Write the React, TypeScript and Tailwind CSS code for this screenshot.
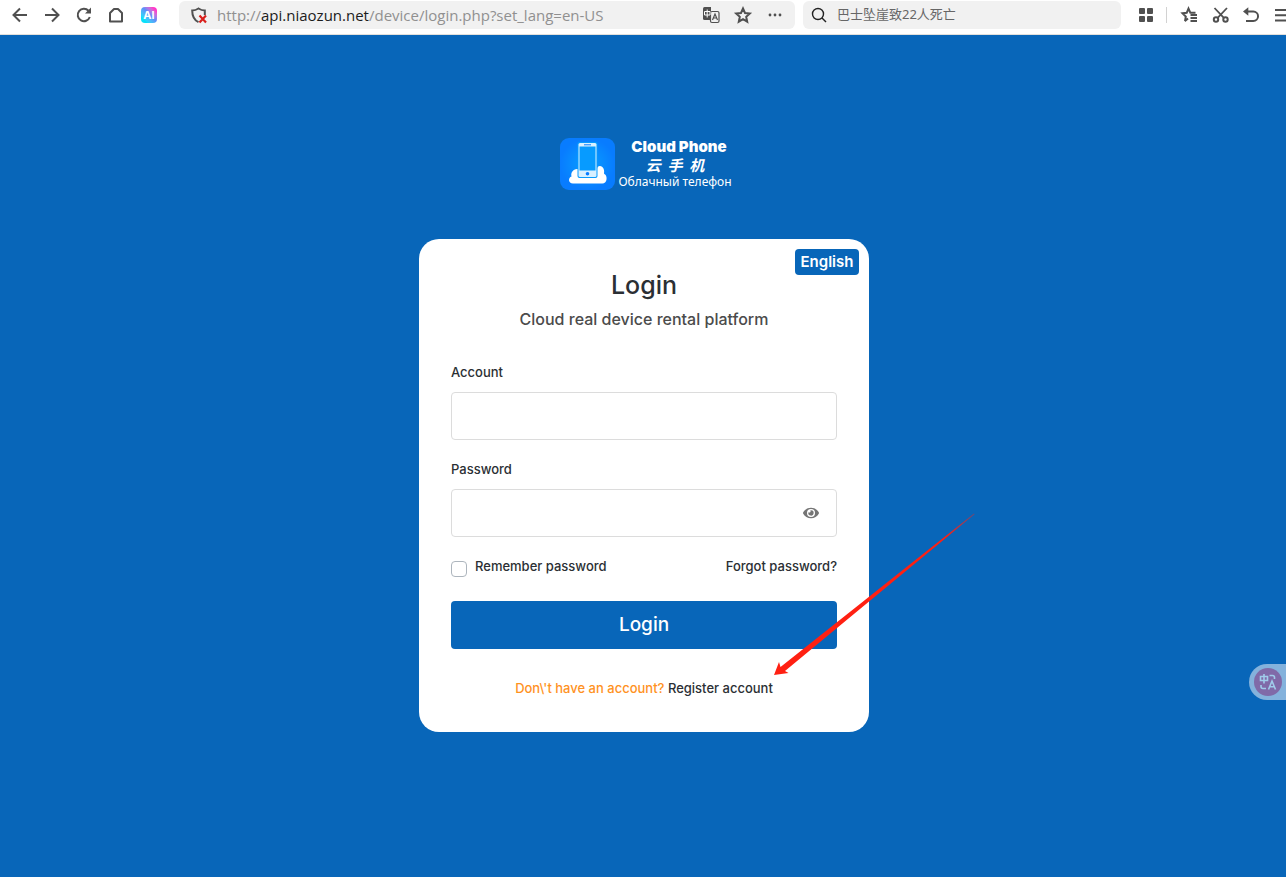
import { useState, type ReactNode } from 'react';
import { FaEye } from 'react-icons/fa';

function Icon({ children }: { children: ReactNode }) {
  return (
    <svg viewBox="0 0 20 20" className="size-5 shrink-0" fill="none" stroke="currentColor" strokeWidth="2">
      {children}
    </svg>
  );
}

function ToolButton({ label, children }: { label: string; children: ReactNode }) {
  return (
    <button type="button" aria-label={label} className="size-5 shrink-0">
      <Icon>{children}</Icon>
    </button>
  );
}

function Toolbar() {
  const [search, setSearch] = useState('巴士坠崖致22人死亡');

  return (
    <header className="flex h-[35px] items-start overflow-hidden border-b border-[#e2e0dc] bg-white pt-px text-[#505050]">
      <nav className="flex h-7 shrink-0 items-center gap-3 pr-5 pl-2.5">
        <ToolButton label="Back"><path d="M17 10H4M10 3.5 3.5 10l6.5 6.5" /></ToolButton>
        <ToolButton label="Forward"><path d="M3 10h13M10 3.5 16.5 10 10 16.5" /></ToolButton>
        <ToolButton label="Reload">
          <path d="M15.8 12A6.2 6.2 0 1 1 14.5 5.7" />
          <path d="M17 2.5v6h-6z" fill="currentColor" stroke="none" />
        </ToolButton>
        <ToolButton label="Home"><path d="M4 16.5V8l4-4h4l4 4v8.5z" strokeLinejoin="round" /></ToolButton>
        <button
          type="button"
          className="mr-0.5 ml-[3px] flex size-4 items-center justify-center rounded bg-linear-to-tr from-[#08e0fa] from-20% via-[#5d8cf8] via-55% to-[#ff38c8] to-85% font-['Inter'] text-[11px] font-bold text-white"
        >
          AI
        </button>
      </nav>

      <div className="flex h-7 min-w-0 flex-1 items-center rounded-md bg-[#f1f1f1] px-2.5">
        <Icon>
          <path d="M9.5 17.2C5 15 3.2 12 3.2 5.5c2.5 0 4.3-.7 6.3-2 2 1.3 4 2 6.3 2V10" />
          <path d="m10.5 10.5 6.5 7m0-7-6.5 7" stroke="#d9201c" strokeWidth="2.2" />
        </Icon>
        <p className="min-w-0 flex-1 truncate pl-2 font-['Open_Sans',sans-serif] text-[15px] leading-5 text-[#909090]">
          http://<span className="text-[#1c1c1c]">api.niaozun.net</span>/device/login.php?set_lang=en-US
        </p>
        <div className="flex items-center gap-3">
          <ToolButton label="Translate page">
            <rect x="9.5" y="6.5" width="8.5" height="11" rx="1.5" strokeWidth="1.2" />
            <path d="M3.5 2H10v13H3.5A1.5 1.5 0 0 1 2 13.5v-10A1.5 1.5 0 0 1 3.5 2z" fill="currentColor" stroke="none" />
            <path d="M3.5 6.5h5.5V10H3.5zM6.2 4.5v8" stroke="#fff" strokeWidth="1" />
            <path d="m11.5 15 2.5-6 2.5 6m-4.2-2h3.4" strokeWidth="1.2" />
          </ToolButton>
          <ToolButton label="Bookmark page">
            <path d="m10 3.5 2 4.5 4.8.5-3.6 3.3 1 4.9L10 14.2l-4.200 2.500 1-4.900-3.600-3.300L8 8z" />
          </ToolButton>
          <ToolButton label="More">
            <g fill="currentColor" stroke="none">
              <circle cx="5" cy="10" r="1.4" />
              <circle cx="10" cy="10" r="1.4" />
              <circle cx="15" cy="10" r="1.4" />
            </g>
          </ToolButton>
        </div>
      </div>

      <label className="ml-2 flex h-7 w-[318px] items-center gap-2 rounded-md bg-[#f1f1f1] pl-1.5">
        <Icon>
          <circle cx="9" cy="9" r="5.5" stroke="#222" strokeWidth="1.4" />
          <path d="m13 13 4 4" stroke="#222" strokeWidth="1.4" />
        </Icon>
        <input
          aria-label="Search"
          value={search}
          onChange={(e) => setSearch(e.target.value)}
          className="min-w-0 flex-1 bg-transparent font-['Noto_Sans','Noto_Sans_CJK_SC',sans-serif] text-[13px] text-[#666] outline-none"
        />
      </label>

      <nav className="ml-[15px] -mr-1.5 flex h-7 shrink-0 items-center">
        <ToolButton label="Apps">
          <g fill="currentColor" stroke="none">
            <rect x="3" y="3" width="6" height="6" rx="1" />
            <rect x="11" y="3" width="6" height="6" rx="1" />
            <rect x="3" y="11" width="6" height="6" rx="1" />
            <rect x="11" y="11" width="6" height="6" rx="1" />
          </g>
        </ToolButton>
        <span className="mr-3 ml-2.5 h-4 w-px bg-[#d2d2d2]" />
        <div className="flex items-center gap-[11px]">
          <ToolButton label="Favorites">
            <path d="m6 16.2.8-4.7-3.3-3.2 4.2-.5 1.8-4.3 1.9 4.300h5.100M9 13.500l-3.300 2.800" />
            <path d="M11.5 10H18M11.5 13H18M11.5 16H18" strokeWidth="1.8" />
          </ToolButton>
          <ToolButton label="Screenshot">
            <circle cx="6" cy="14.5" r="2.2" />
            <circle cx="15.5" cy="14.5" r="2.2" />
            <path d="m4.5 3 9.6 10.2M17 3 7.4 13.2" strokeWidth="1.8" />
          </ToolButton>
          <ToolButton label="Undo">
            <path d="M5 6.5h7.3a4.7 4.7 0 0 1 0 9.500H5" />
            <path d="M7.3 2.2v8.6L2 6.5z" fill="currentColor" stroke="none" />
          </ToolButton>
          <ToolButton label="Menu"><path d="M3 5h14M3 10.2h14M3 15.5h14" /></ToolButton>
        </div>
      </nav>
    </header>
  );
}

function Logo() {
  return (
    <div className="flex items-center gap-[3px] pl-1 text-white">
      <svg viewBox="0 0 55 52" className="h-[52px] w-[55px]">
        <defs>
          <radialGradient id="tile">
            <stop offset="0" stopColor="#08a0ff" />
            <stop offset="1" stopColor="#087cff" />
          </radialGradient>
        </defs>
        <rect width="55" height="52" rx="9" fill="url(#tile)" />
        <path
          d="M13 45.5c-5 0-5-6-1.5-7-1-4 1.5-7 5.5-7.5h20c0-4 6-4 7 1 .4 2-.3 3.5.3 4 3.5 1.5 3.2 9.5-2 9.5z"
          fill="#fff"
        />
        <rect x="17.5" y="4" width="20" height="36" rx="2" fill="#079bff" />
        <rect x="18.5" y="5" width="18" height="34" rx="1.5" fill="#d8f0ff" />
        <rect x="19.5" y="8.5" width="16" height="24" fill="#079bff" />
        <path d="M24 6.8h7" stroke="#087cff" />
        <circle cx="27.5" cy="35.8" r="1.8" fill="#087cff" />
      </svg>
      <div className="flex flex-col items-center">
        <p className="pl-2 font-['Inter',sans-serif] text-[15px] leading-[18px] font-black">Cloud Phone</p>
        <p className="flex gap-[7px] font-['Noto_Sans_CJK_SC',sans-serif] text-[15px] leading-[18px] font-bold italic whitespace-pre">
          云  手  机
        </p>
        <p className="font-['Noto_Sans',sans-serif] text-[12px] leading-4">Облачный телефон</p>
      </div>
    </div>
  );
}

function Arrow() {
  return (
    <svg viewBox="0 0 204 168" className="pointer-events-none absolute top-[269px] left-[355px] h-[168px] w-[204px]">
      <defs>
        <linearGradient id="fade" x1="0" y1="1" x2="1" y2="0">
          <stop offset="0.85" stopColor="#ff2012" />
          <stop offset="1" stopColor="#ff2012" stopOpacity="0.4" />
        </linearGradient>
      </defs>
      <path d="M0 167 5 154l1.5 5L200 5.500l.6.800L11 163l3.500 2z" fill="url(#fade)" />
    </svg>
  );
}

const labelClass = 'block text-[13px] leading-5';
const inputClass = 'h-12 w-full rounded-[4px] border border-[#dcdcdc] px-4 text-base outline-none';

function LoginCard() {
  const [showPassword, setShowPassword] = useState(false);

  return (
    <section className="relative mt-[49px] w-full max-w-[450px] rounded-[20px] bg-white p-8 font-['Inter',sans-serif] font-medium text-[#2b2f34]">
      <button
        type="button"
        className="absolute top-2.5 right-2.5 h-[26px] w-16 rounded-[4px] bg-[#0866b9] text-[15px] font-semibold text-white"
      >
        English
      </button>

      <h1 className="text-center text-[25px] leading-7">Login</h1>
      <p className="mt-2 text-center text-[16px] leading-6 text-[#4b4b4b]">Cloud real device rental platform</p>

      <form className="mt-[31px]" onSubmit={(e) => e.preventDefault()}>
        <div className="flex flex-col gap-[19px]">
          <div>
            <label htmlFor="account" className={labelClass}>Account</label>
            <input id="account" type="text" className={`${inputClass} mt-2.5`} />
          </div>
          <div>
            <label htmlFor="password" className={labelClass}>Password</label>
            <div className="relative mt-2.5">
              <input id="password" type={showPassword ? 'text' : 'password'} className={inputClass} />
              <button
                type="button"
                aria-label="Show password"
                onClick={() => setShowPassword(!showPassword)}
                className="absolute inset-y-0 right-4 flex w-5 items-center justify-center text-[#757575]"
              >
                <FaEye className="size-4" />
              </button>
            </div>
          </div>
          <div className="flex items-start justify-between text-[13px] leading-5">
            <label className="flex items-start gap-2">
              <input
                type="checkbox"
                className="mt-[5px] size-4 appearance-none rounded-[4px] border border-[#adb5bd] bg-white checked:bg-[#0866b9]"
              />
              Remember password
            </label>
            <a href="#forgot">Forgot password?</a>
          </div>
        </div>
        <button type="submit" className="mt-6 block h-12 w-full rounded-[4px] bg-[#0866b9] text-[19px] leading-7 text-white">
          Login
        </button>
      </form>

      <p className="mt-[27px] text-center text-[13px] leading-6 text-[#ff921e]">
        {"Don\\'t have an account? "}
        <a href="#register" className="text-[#2b2f34]">Register account</a>
      </p>

      <Arrow />
    </section>
  );
}

export default function App() {
  return (
    <div className="flex min-h-screen flex-col bg-[#0866b9]">
      <Toolbar />
      <main className="flex flex-1 flex-col items-center pt-[103px] pl-0.5">
        <Logo />
        <LoginCard />
      </main>
      <button
        type="button"
        aria-label="Translate"
        className="fixed top-[664px] right-0 flex h-9 w-[37px] items-center rounded-l-full bg-[#84b2dc] pl-[5px]"
      >
        <svg viewBox="0 0 28 28" className="size-7" fill="none" stroke="#9fcbea" strokeWidth="1.6">
          <circle cx="14" cy="14" r="14" fill="#806aa8" stroke="none" />
          <path d="M6.5 8.5h7v4h-7zM10 6v9.5M15.5 7.5h3a2 2 0 0 1 2 2V11M7 17v1.5a2 2 0 0 0 2 2h3M14.5 21.5 18 13l3.500 8.500M15.500 18.800h5" />
        </svg>
      </button>
    </div>
  );
}
